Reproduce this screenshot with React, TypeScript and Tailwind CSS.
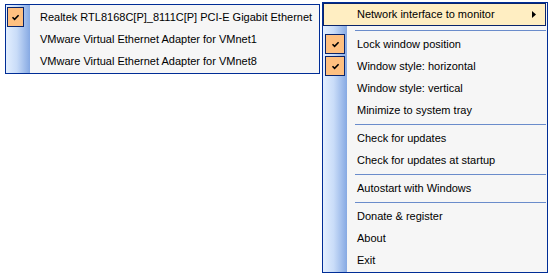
import React from "react";

const Check = () => (
  <svg width="9" height="7" viewBox="0 0 9 7" className="block">
    <path d="M1.5 3.2 L3.6 5.3 L7.6 1.2" fill="none" stroke="#000" strokeWidth="1.6" />
  </svg>
);

type Item = { kind: "item"; label: string; checked?: boolean } | { kind: "sep"; first?: boolean };

const rightItems: Item[] = [
  { kind: "sep", first: true },
  { kind: "item", label: "Lock window position", checked: true },
  { kind: "item", label: "Window style: horizontal", checked: true },
  { kind: "item", label: "Window style: vertical" },
  { kind: "item", label: "Minimize to system tray" },
  { kind: "sep" },
  { kind: "item", label: "Check for updates" },
  { kind: "item", label: "Check for updates at startup" },
  { kind: "sep" },
  { kind: "item", label: "Autostart with Windows" },
  { kind: "sep" },
  { kind: "item", label: "Donate & register" },
  { kind: "item", label: "About" },
  { kind: "item", label: "Exit" },
];

const leftItems = [
  { label: "Realtek RTL8168C[P]_8111C[P] PCI-E Gigabit Ethernet", checked: true },
  { label: "VMware Virtual Ethernet Adapter for VMnet1" },
  { label: "VMware Virtual Ethernet Adapter for VMnet8" },
];

const bar = "bg-[linear-gradient(to_right,#e3efff,#c9dcf8_45%,#86a9e3)]";

export default function App() {
  return (
    <div
      className="w-[553px] h-[279px] bg-white flex items-start text-[11px] text-black"
      style={{ fontFamily: '"Liberation Sans", Arial, sans-serif' }}
    >
      {/* Left submenu */}
      <div className="ml-[5px] mt-[4px] w-[315px] border border-[#002d96] bg-[#f6f6f6] flex">
        <div className={`w-[24px] ${bar} shrink-0`} />
        <div className="flex-1 pt-[1px] pb-[1px] -ml-[24px]">
          {leftItems.map((it, i) => (
            <div key={i} className="h-[22px] flex items-center">
              <div className="w-[24px] shrink-0 flex items-center pl-[1px]">
                {it.checked && (
                  <div className="w-[17px] h-[20px] border border-[#0a246a] bg-[#ffc080] flex items-center justify-center">
                    <Check />
                  </div>
                )}
              </div>
              <span className="ml-[10px] whitespace-nowrap">{it.label}</span>
            </div>
          ))}
        </div>
      </div>

      {/* Main menu */}
      <div className="ml-[2px] mt-[2px] w-[226px] border border-[#002d96] bg-[#f6f6f6] flex">
        <div className={`w-[24px] ${bar} shrink-0`} />
        <div className="flex-1 -ml-[24px] pb-[1px] pr-[1px]">
          <div className="h-[23px] flex items-center border border-[#0a246a] bg-[#ffeec2]">
            <span className="ml-[33px] whitespace-nowrap">Network interface to monitor</span>
            <svg width="4" height="7" viewBox="0 0 4 7" className="ml-auto mr-[9px]">
              <path d="M0 0 L4 3.5 L0 7 Z" fill="#000" />
            </svg>
          </div>
          {rightItems.map((it, i) =>
            it.kind === "sep" ? (
              <div key={i} className={`${it.first ? "h-[7px] pt-[4px]" : "h-[6px] pt-[3px]"} pl-[32px]`}>
                <div className="h-[1px] bg-[#6a8ccb]" />
              </div>
            ) : (
              <div key={i} className="h-[22px] flex items-center">
                <div className="w-[24px] shrink-0 flex items-center pl-[2px]">
                  {it.checked && (
                    <div className="w-[20px] h-[20px] border border-[#0a246a] bg-[#ffc080] flex items-center justify-center">
                      <Check />
                    </div>
                  )}
                </div>
                <span className="ml-[10px] whitespace-nowrap">{it.label}</span>
              </div>
            )
          )}
        </div>
      </div>
    </div>
  );
}
